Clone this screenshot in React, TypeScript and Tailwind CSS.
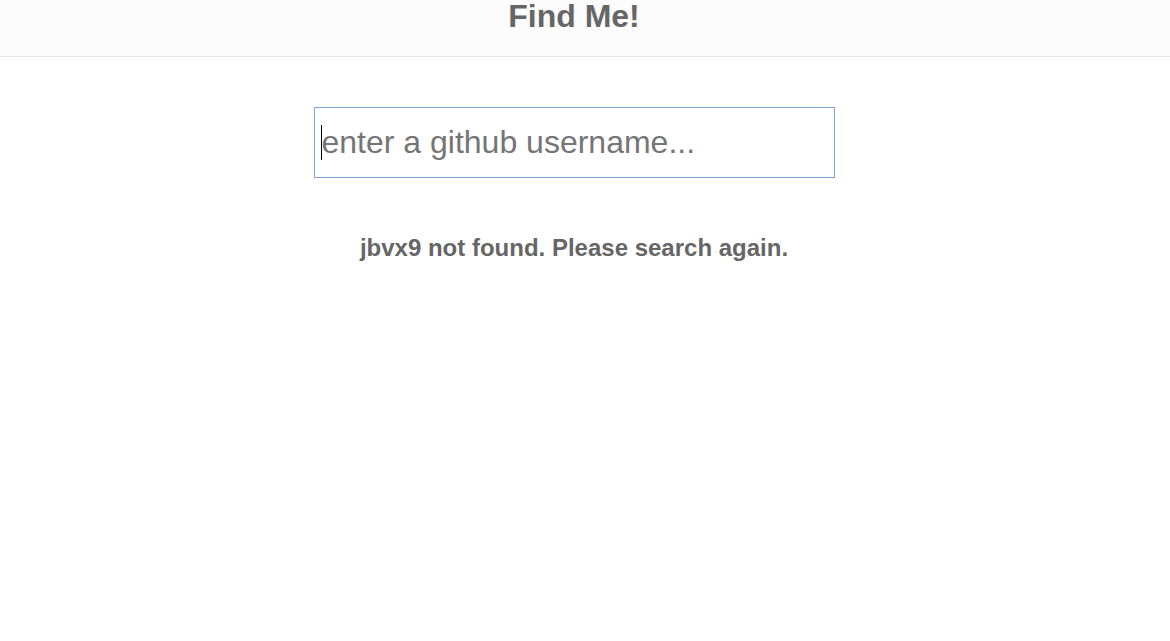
import React from "react";

export default function App() {
  return (
    <div className="min-h-[641px] bg-white" style={{ fontFamily: '"Liberation Sans", Arial, sans-serif' }}>
      <header className="h-[57px] bg-[#fcfcfc] border-b border-[#e4e4e4]">
        <div className="w-[1148px] flex justify-center">
          <h1 className="text-[32px] leading-[32px] font-bold text-[#666666]">Find Me!</h1>
        </div>
      </header>
      <div className="w-[1148px] flex flex-col items-center pt-[50px]">
        <div className="relative">
          <input
            type="text"
            placeholder="enter a github username..."
            className="block w-[521px] h-[71px] border border-[#7fa3d8] bg-white pl-[7px] pr-[6px] pb-[1px] text-[32px] text-[#333] placeholder:text-[#757575] outline-none"
            style={{ fontFamily: '"Liberation Sans", Arial, sans-serif' }}
          />
          <span className="absolute left-[7px] top-[18px] w-px h-[35px] bg-black" />
        </div>
        <p className="mt-[56px] text-[24px] leading-[28px] font-bold text-[#666666]">
          jbvx9 not found. Please search again.
        </p>
      </div>
    </div>
  );
}
